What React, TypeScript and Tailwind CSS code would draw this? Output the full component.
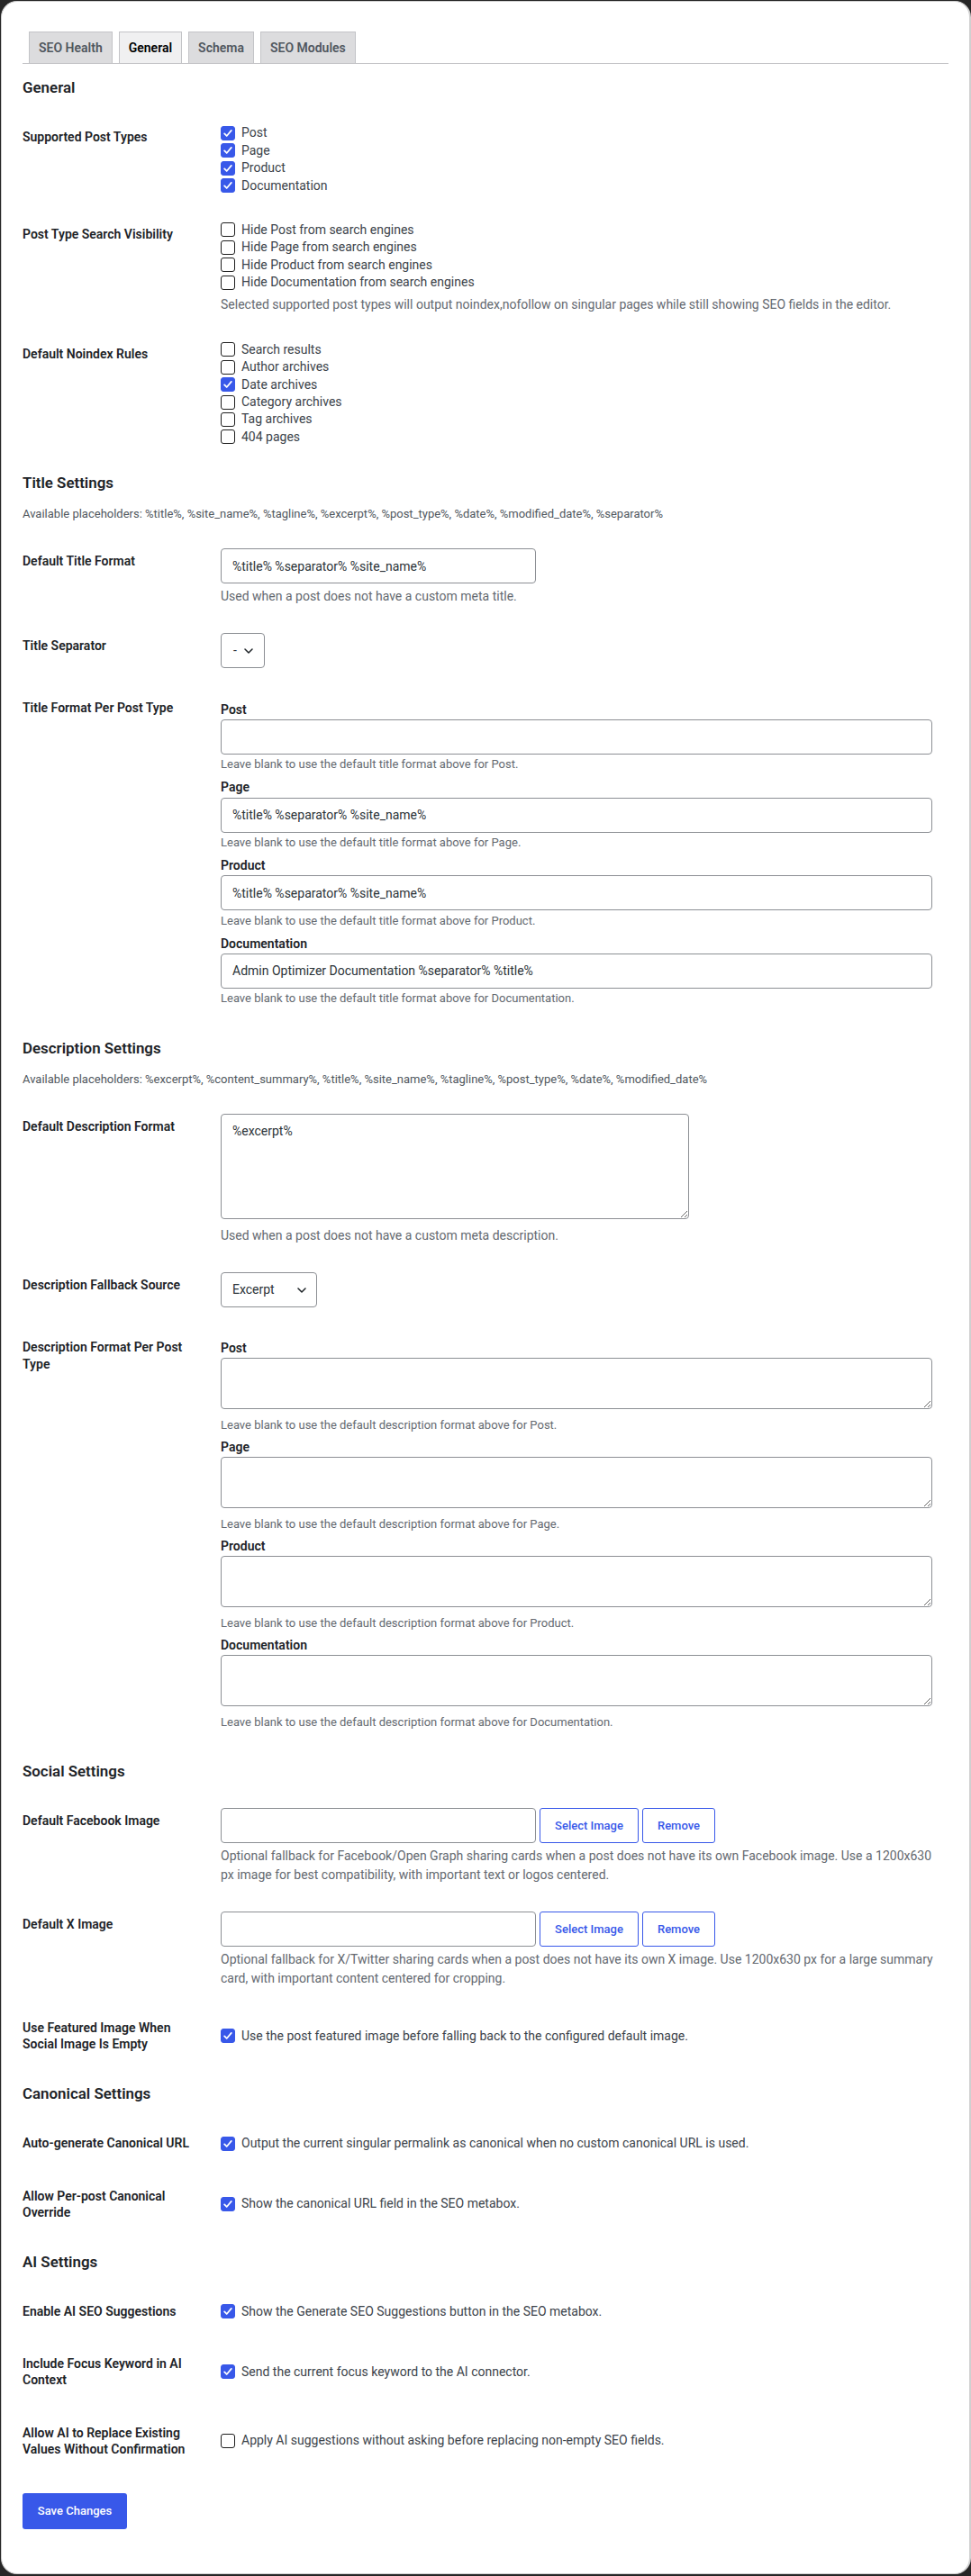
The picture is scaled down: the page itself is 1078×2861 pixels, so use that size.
import React from "react";

type Item = { text: string; checked: boolean };

function Box({ checked }: { checked: boolean }) {
  return (
    <span
      className={
        checked
          ? "mr-[7px] flex h-[16px] w-[16px] shrink-0 items-center justify-center rounded-[3px] border border-[#3858e9] bg-[#3858e9]"
          : "mr-[7px] flex h-[16px] w-[16px] shrink-0 items-center justify-center rounded-[3px] border border-[#1e1e1e] bg-white"
      }
    >
      {checked && (
        <svg viewBox="0 0 16 16" className="h-[14px] w-[14px]">
          <path
            d="M3.6 8.4l2.9 3 5.9-7"
            fill="none"
            stroke="#ffffff"
            strokeWidth="2"
            strokeLinecap="round"
            strokeLinejoin="round"
          />
        </svg>
      )}
    </span>
  );
}

function CheckLine({ text, checked }: Item) {
  return (
    <label className="flex h-[19.45px] items-center text-[14px] text-[#3c434a]">
      <Box checked={checked} />
      <span>{text}</span>
    </label>
  );
}

function Row({ label, children }: { label: React.ReactNode; children: React.ReactNode }) {
  return (
    <div className="flex items-center">
      <div className="w-[210px] shrink-0 self-start py-5 pr-[10px] text-[14px] font-semibold leading-[18.2px] text-[#1d2327]">
        {label}
      </div>
      <div className="min-w-0 flex-1 px-[10px] py-[15px]">{children}</div>
    </div>
  );
}

function Heading({ children }: { children: React.ReactNode }) {
  return (
    <h2 className="mt-[15px] mb-[14px] text-[16.9px] font-semibold leading-[23px] text-[#1d2327]">
      {children}
    </h2>
  );
}

function Placeholders({ children }: { children: React.ReactNode }) {
  return <p className="mt-[1px] mb-[14px] text-[13px] leading-[18px] text-[#50575e]">{children}</p>;
}

function Help({ children }: { children: React.ReactNode }) {
  return <p className="mt-[4px] text-[14px] leading-[21px] text-[#646970]">{children}</p>;
}

function Chevron() {
  return (
    <svg viewBox="0 0 10 6" className="h-[6px] w-[10px]">
      <path d="M1 1l4 4 4-4" fill="none" stroke="#1d2327" strokeWidth="1.5" strokeLinecap="round" strokeLinejoin="round" />
    </svg>
  );
}

const inputCls =
  "block h-[39px] rounded-[4px] border border-[#8c8f94] bg-white px-[12px] text-[14px] text-[#2c3338] outline-none";

const types = ["Post", "Page", "Product", "Documentation"];

const titleFormats: Record<string, string> = {
  Post: "",
  Page: "%title% %separator% %site_name%",
  Product: "%title% %separator% %site_name%",
  Documentation: "Admin Optimizer Documentation %separator% %title%",
};

const noindex: Item[] = [
  { text: "Search results", checked: false },
  { text: "Author archives", checked: false },
  { text: "Date archives", checked: true },
  { text: "Category archives", checked: false },
  { text: "Tag archives", checked: false },
  { text: "404 pages", checked: false },
];

const tabs = [
  { name: "SEO Health", active: false },
  { name: "General", active: true },
  { name: "Schema", active: false },
  { name: "SEO Modules", active: false },
];

function ImageField({ help }: { help: string }) {
  return (
    <div>
      <div className="flex gap-[4px]">
        <input className={inputCls + " w-[350px]"} defaultValue="" />
        <button className="h-[39px] w-[110px] rounded-[3px] border border-[#3858e9] bg-white text-[13px] font-medium text-[#3858e9]">
          Select Image
        </button>
        <button className="h-[39px] w-[81px] rounded-[3px] border border-[#3858e9] bg-white text-[13px] font-medium text-[#3858e9]">
          Remove
        </button>
      </div>
      <Help>{help}</Help>
    </div>
  );
}

export default function App() {
  return (
    <div className="min-h-screen bg-[#262626] pt-[1px] pl-[1px] font-[family-name:Roboto,sans-serif]">
      <div className="rounded-[18px] border border-r-2 border-[#d0d0d0] bg-white px-[23px] pt-[33px] pb-[49px]">
        {/* tab strip */}
        <div className="flex border-b border-[#c3c4c7]">
          {tabs.map((t) => (
            <div
              key={t.name}
              className={
                t.active
                  ? "ml-[7px] border border-b-0 border-[#c3c4c7] bg-[#f0f0f1] px-[10px] py-[5px] text-[14px] font-semibold leading-[24px] text-black"
                  : "ml-[7px] border border-b-0 border-[#c3c4c7] bg-[#dcdcde] px-[10px] py-[5px] text-[14px] font-semibold leading-[24px] text-[#50575e]"
              }
            >
              {t.name}
            </div>
          ))}
        </div>

        {/* General */}
        <Heading>General</Heading>
        <Row label="Supported Post Types">
          {types.map((t) => (
            <CheckLine key={t} text={t} checked />
          ))}
        </Row>
        <Row label="Post Type Search Visibility">
          {types.map((t) => (
            <CheckLine key={t} text={`Hide ${t} from search engines`} checked={false} />
          ))}
          <Help>
            Selected supported post types will output noindex,nofollow on singular pages while still showing SEO fields
            in the editor.
          </Help>
        </Row>
        <Row label="Default Noindex Rules">
          {noindex.map((n) => (
            <CheckLine key={n.text} text={n.text} checked={n.checked} />
          ))}
        </Row>

        {/* Title settings */}
        <Heading>Title Settings</Heading>
        <Placeholders>
          Available placeholders: %title%, %site_name%, %tagline%, %excerpt%, %post_type%, %date%, %modified_date%,
          %separator%
        </Placeholders>
        <Row label="Default Title Format">
          <input className={inputCls + " w-[350px]"} defaultValue="%title% %separator% %site_name%" />
          <Help>Used when a post does not have a custom meta title.</Help>
        </Row>
        <Row label="Title Separator">
          <div className="flex h-[39px] w-[49px] items-center justify-between rounded-[4px] border border-[#8c8f94] pl-[13px] pr-[12px] text-[14px] text-[#2c3338]">
            <span>-</span>
            <Chevron />
          </div>
        </Row>
        <Row label="Title Format Per Post Type">
          <div className="pb-[4px]">
            {types.map((t) => (
              <div key={t} className="mt-[6.5px]">
                <div className="mb-[2px] text-[14px] font-semibold leading-[18.2px] text-[#1d2327]">{t}</div>
                <input className={inputCls + " w-[99%]"} defaultValue={titleFormats[t]} />
                <p className="mt-[1.5px] text-[13px] leading-[19.5px] text-[#646970]">
                  Leave blank to use the default title format above for {t}.
                </p>
              </div>
            ))}
          </div>
        </Row>

        {/* Description settings */}
        <Heading>Description Settings</Heading>
        <Placeholders>
          Available placeholders: %excerpt%, %content_summary%, %title%, %site_name%, %tagline%, %post_type%, %date%,
          %modified_date%
        </Placeholders>
        <Row label="Default Description Format">
          <textarea
            className="block h-[117px] w-[520px] rounded-[4px] border border-[#8c8f94] bg-white px-[12px] py-[8px] text-[14px] leading-[21px] text-[#2c3338] outline-none"
            defaultValue="%excerpt%"
          />
          <p className="mt-[8.5px] text-[14px] leading-[21px] text-[#646970]">
            Used when a post does not have a custom meta description.
          </p>
        </Row>
        <Row label="Description Fallback Source">
          <div className="flex h-[39px] w-[107px] items-center justify-between rounded-[4px] border border-[#8c8f94] pl-[12px] pr-[11px] text-[14px] text-[#2c3338]">
            <span>Excerpt</span>
            <Chevron />
          </div>
        </Row>
        <Row label="Description Format Per Post Type">
          <div className="pb-[4px]">
            {types.map((t) => (
              <div key={t} className="mt-[6px]">
                <div className="mb-[1.2px] text-[14px] font-semibold leading-[18.2px] text-[#1d2327]">{t}</div>
                <textarea
                  className="block h-[57px] w-[99%] rounded-[4px] border border-[#8c8f94] bg-white px-[12px] py-[8px] text-[14px] leading-[21px] text-[#2c3338] outline-none"
                  defaultValue=""
                />
                <p className="mt-[8px] text-[13px] leading-[19.5px] text-[#646970]">
                  Leave blank to use the default description format above for {t}.
                </p>
              </div>
            ))}
          </div>
        </Row>

        {/* Social settings */}
        <Heading>Social Settings</Heading>
        <Row label="Default Facebook Image">
          <ImageField help="Optional fallback for Facebook/Open Graph sharing cards when a post does not have its own Facebook image. Use a 1200x630 px image for best compatibility, with important text or logos centered." />
        </Row>
        <Row label="Default X Image">
          <ImageField help="Optional fallback for X/Twitter sharing cards when a post does not have its own X image. Use 1200x630 px for a large summary card, with important content centered for cropping." />
        </Row>
        <Row label="Use Featured Image When Social Image Is Empty">
          <CheckLine text="Use the post featured image before falling back to the configured default image." checked />
        </Row>

        {/* Canonical settings */}
        <Heading>Canonical Settings</Heading>
        <Row label="Auto-generate Canonical URL">
          <CheckLine text="Output the current singular permalink as canonical when no custom canonical URL is used." checked />
        </Row>
        <Row label="Allow Per-post Canonical Override">
          <CheckLine text="Show the canonical URL field in the SEO metabox." checked />
        </Row>

        {/* AI settings */}
        <Heading>AI Settings</Heading>
        <Row label="Enable AI SEO Suggestions">
          <CheckLine text="Show the Generate SEO Suggestions button in the SEO metabox." checked />
        </Row>
        <Row label="Include Focus Keyword in AI Context">
          <CheckLine text="Send the current focus keyword to the AI connector." checked />
        </Row>
        <Row label="Allow AI to Replace Existing Values Without Confirmation">
          <CheckLine text="Apply AI suggestions without asking before replacing non-empty SEO fields." checked={false} />
        </Row>

        <button className="mt-[20px] h-[40px] w-[116px] rounded-[3px] bg-[#3858e9] text-[13px] font-medium text-white">
          Save Changes
        </button>
      </div>
    </div>
  );
}
